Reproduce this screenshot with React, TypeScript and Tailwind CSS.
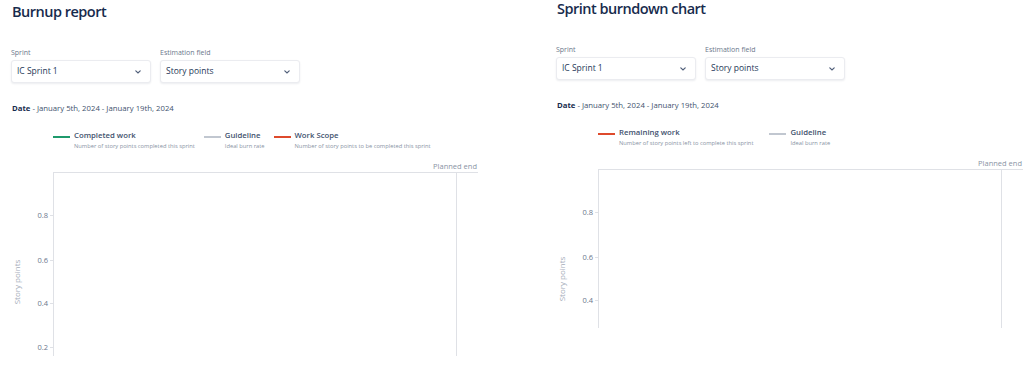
import type { ReactNode } from "react";

type LegendItem = { color: string; label: string; hint: string };

const ticks = [
  { value: "0.8", y: 43 },
  { value: "0.6", y: 88 },
  { value: "0.4", y: 131 },
  { value: "0.2", y: 175 },
];

function Select({ value }: { value: string }) {
  return (
    <div className="flex h-[23px] w-[140px] items-center justify-between rounded-[3px] border border-[#ebecf0] bg-white pl-[5px] pr-[9px] shadow-[0_1px_2px_rgba(9,30,66,0.08)]">
      <span className="text-[8.5px] leading-none text-[#253858]">{value}</span>
      <svg width="6" height="4" viewBox="0 0 6 4" className="text-[#505f79]">
        <path d="M0.8 0.8 L3 3 L5.2 0.8" fill="none" stroke="currentColor" strokeWidth="1.2" strokeLinecap="round" />
      </svg>
    </div>
  );
}

function Field({ label, children }: { label: string; children: ReactNode }) {
  return (
    <div className="flex flex-col gap-[2px]">
      <span className="text-[7px] leading-[10px] text-[#6b778c]">{label}</span>
      {children}
    </div>
  );
}

function Legend({ items, gapClass }: { items: LegendItem[]; gapClass: string }) {
  return (
    <div className={`flex items-start pl-[53px] ${gapClass}`}>
      {items.map((item) => (
        <div key={item.label} className="flex items-start gap-[4px]">
          <span className={`mt-[7px] h-[2px] w-[17px] ${item.color}`} />
          <div className="flex flex-col">
            <span className="text-[7.75px] font-semibold leading-[13px] text-[#42526e]">{item.label}</span>
            <span className="text-[5.75px] leading-[9px] text-[#8993a4]">{item.hint}</span>
          </div>
        </div>
      ))}
    </div>
  );
}

function Chart({ clipClass, tickCount }: { clipClass: string; tickCount: number }) {
  return (
    <div className="flex flex-col">
      <div className="flex w-[478px] justify-end pr-[1px]">
        <span className="text-[7.5px] leading-[11px] text-[#8993a4]">Planned end</span>
      </div>
      <div className={`overflow-hidden ${clipClass}`}>
        <div className="flex h-[219px]">
          <div className="flex w-[34px] shrink-0 items-center justify-center">
            <span className="-rotate-90 whitespace-nowrap text-[8px] text-[#a5adba]">Story points</span>
          </div>
          <div className="relative w-[19px] shrink-0">
            {ticks.slice(0, tickCount).map((t) => (
              <div key={t.value} className="absolute right-0 flex items-center gap-[2px]" style={{ top: t.y - 5 }}>
                <span className="text-[7.5px] leading-[10px] text-[#6b778c]">{t.value}</span>
                <span className="h-px w-[3px] bg-[#dfe1e6]" />
              </div>
            ))}
          </div>
          <div className="relative h-full w-[425px] shrink-0 border-l border-t border-[#dfe1e6]">
            <div className="absolute bottom-0 left-[402px] top-0 w-px bg-[#dfe1e6]" />
          </div>
        </div>
      </div>
    </div>
  );
}

function Panel({
  title,
  legend,
  legendGap,
  clipClass,
  tickCount,
  topClass,
  widthClass,
}: {
  title: string;
  legend: LegendItem[];
  legendGap: string;
  clipClass: string;
  tickCount: number;
  topClass: string;
  widthClass: string;
}) {
  return (
    <section className={`flex shrink-0 flex-col overflow-hidden ${widthClass} ${topClass}`}>
      <h1 className="pl-[12px] text-[14.5px] font-semibold leading-[18px] tracking-[-0.035em] text-[#172b4d]">{title}</h1>
      <div className="mt-[27px] flex gap-[9px] pl-[11px]">
        <Field label="Sprint">
          <Select value="IC Sprint 1" />
        </Field>
        <Field label="Estimation field">
          <Select value="Story points" />
        </Field>
      </div>
      <p className="mt-[19px] pl-[12px] text-[7.75px] leading-[12px] text-[#42526e]">
        <span className="font-bold text-[#172b4d]">Date</span> - January 5th, 2024 - January 19th, 2024
      </p>
      <div className="mt-[15px]">
        <Legend items={legend} gapClass={legendGap} />
      </div>
      <div className="mt-[10px]">
        <Chart clipClass={clipClass} tickCount={tickCount} />
      </div>
    </section>
  );
}

export default function App() {
  return (
    <div className="flex h-[380px] w-[1024px] items-start overflow-hidden bg-white font-['Open_Sans',sans-serif]">
      <Panel
        title="Burnup report"
        widthClass="w-[545px]"
        topClass="pt-[3px]"
        legendGap="gap-[9px]"
        clipClass="h-[184px]"
        tickCount={4}
        legend={[
          { color: "bg-[#1f9a6c]", label: "Completed work", hint: "Number of story points completed this sprint" },
          { color: "bg-[#c1c7d0]", label: "Guideline", hint: "Ideal burn rate" },
          { color: "bg-[#de4a2c]", label: "Work Scope", hint: "Number of story points to be completed this sprint" },
        ]}
      />
      <Panel
        title="Sprint burndown chart"
        widthClass="w-[479px]"
        topClass="pt-0"
        legendGap="gap-[16px]"
        clipClass="h-[159px]"
        tickCount={3}
        legend={[
          { color: "bg-[#de4a2c]", label: "Remaining work", hint: "Number of story points left to complete this sprint" },
          { color: "bg-[#c1c7d0]", label: "Guideline", hint: "Ideal burn rate" },
        ]}
      />
    </div>
  );
}
